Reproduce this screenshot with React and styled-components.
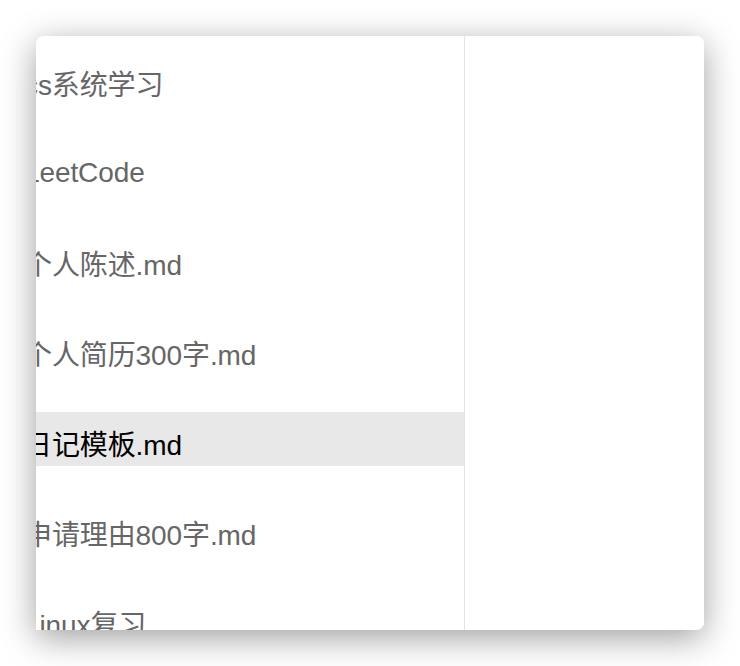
import React from "react";
import styled, { createGlobalStyle } from "styled-components";

const Global = createGlobalStyle`
  html, body { margin: 0; padding: 0; background: #ffffff; }
  body { font-family: "Liberation Sans", "Noto Sans CJK SC", sans-serif; }
`;

const Stage = styled.div`
  width: 740px;
  height: 666px;
  padding: 36px;
  box-sizing: border-box;
`;

const Window = styled.div`
  width: 668px;
  height: 594px;
  background: #ffffff;
  border-radius: 8px 8px 8px 0;
  box-shadow: 0 8px 34px rgba(0, 0, 0, 0.38);
  overflow: hidden;
  display: flex;
`;

const Sidebar = styled.div`
  width: 428px;
  flex: none;
  border-right: 1.5px solid #e4e4e4;
  box-sizing: content-box;
  padding-top: 16px;
  display: flex;
  flex-direction: column;
  gap: 36px;
  overflow: hidden;
`;

const Row = styled.div`
  height: 54px;
  flex: none;
  display: flex;
  align-items: center;
  padding-top: 8px;
  box-sizing: border-box;
  background: ${(p) => (p.$active ? "#e8e8e8" : "transparent")};
`;

const Label = styled.span`
  margin-left: -12px;
  font-size: 28px;
  letter-spacing: -0.1px;
  white-space: nowrap;
  color: ${(p) => (p.$active ? "#000000" : "#666666")};
`;

const Detail = styled.div`
  flex: 1;
  background: #ffffff;
`;

const items = [
  "cs系统学习",
  "LeetCode",
  "个人陈述.md",
  "个人简历300字.md",
  "日记模板.md",
  "申请理由800字.md",
  "Linux复习",
];

export default function App() {
  return (
    <>
      <Global />
      <Stage>
        <Window>
          <Sidebar>
            {items.map((t, i) => (
              <Row key={t} $active={i === 4}>
                <Label $active={i === 4}>{t}</Label>
              </Row>
            ))}
          </Sidebar>
          <Detail />
        </Window>
      </Stage>
    </>
  );
}
